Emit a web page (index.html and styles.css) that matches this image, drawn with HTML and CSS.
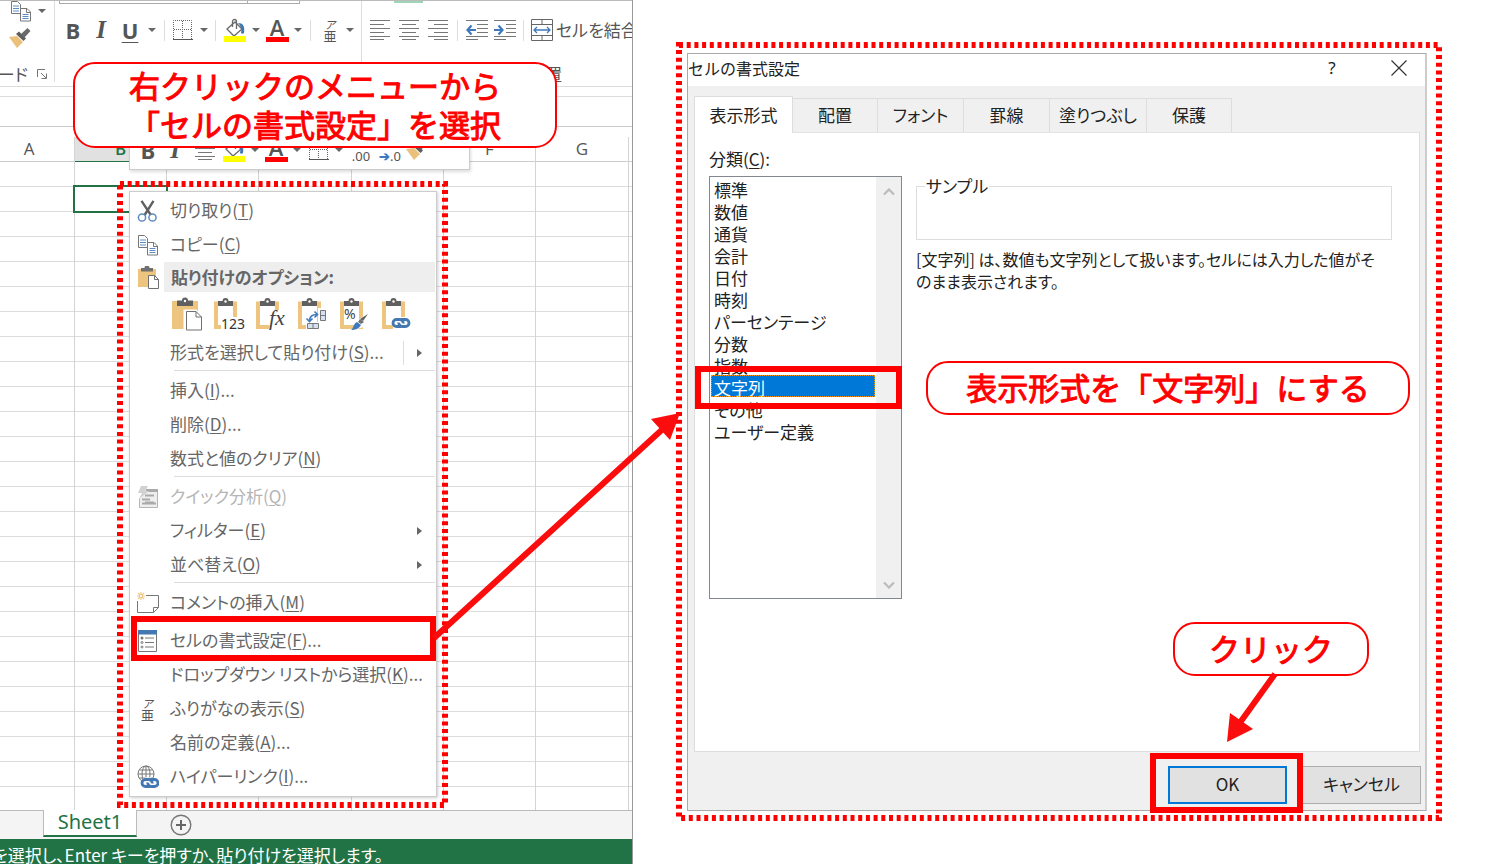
FILE: index.html
```html
<!DOCTYPE html>
<html lang="ja">
<head>
<meta charset="utf-8">
<title>セルの書式設定</title>
<link rel="stylesheet" href="styles.css">
</head>
<body>
<svg class="defs" aria-hidden="true">
  <symbol id="i-copy" viewBox="0 0 22 22">
    <path d="M1.5 1.5h6l3 3v9h-9z" fill="#fff" stroke="#777"/><path d="M3 6h6M3 8.500h6M3 11h6" stroke="#5b8cc4"/>
    <path d="M10.500 8.500h6.500l3.500 3.500v9h-10z" fill="#fff" stroke="#777"/><path d="M16.500 8.500v4h4" fill="none" stroke="#777"/><path d="M12.500 14.500h6M12.500 16.500h6M12.500 18.500h6" stroke="#5b8cc4"/>
  </symbol>
  <symbol id="i-brush" viewBox="0 0 24 22">
    <path d="M1 10l8-1 6 6-6 6z" fill="#eac07b"/><path d="M8 7l3-2.500 7 7L15.500 14z" fill="#5e5e5e"/><path d="M13 7l6.500-6 3 3-6 6.500z" fill="#6a6a6a"/>
  </symbol>
  <symbol id="i-bucket" viewBox="0 0 24 24">
    <path d="M4 11l8-7 7 7-8 7z" fill="#fff" stroke="#6a6a6a" stroke-width="1.300"/><path d="M9.500 9V3.500a2 2 0 0 1 4 0V11" fill="none" stroke="#6a6a6a" stroke-width="1.300"/><path d="M15 5c5 0 7 3 6 10-1 1-2 1-3 0 1-4 0-7-3-10z" fill="#3d78b5"/><path d="M1 18h22v6H1z" fill="#ff0"/>
  </symbol>
  <symbol id="i-border" viewBox="0 0 22 22">
    <path d="M1.500 20V1.500h18V20M10.500 2v18M2 10.500h18" fill="none" stroke="#666" stroke-dasharray="1 1"/><path d="M1 20.500h20" stroke="#555"/>
  </symbol>
  <symbol id="i-left" viewBox="0 0 20 22"><path d="M0 1.500h20M0 5.500h14M0 9.500h20M0 13.500h14M0 17.500h20M0 20.500h14" stroke="#777"/></symbol>
  <symbol id="i-center" viewBox="0 0 20 22"><path d="M0 1.500h20M3 5.500h14M0 9.500h20M3 13.500h14M0 17.500h20M3 20.500h14" stroke="#777"/></symbol>
  <symbol id="i-right" viewBox="0 0 20 22"><path d="M0 1.500h20M6 5.500h14M0 9.500h20M6 13.500h14M0 17.500h20M6 20.500h14" stroke="#777"/></symbol>
  <symbol id="i-outdent" viewBox="0 0 22 22"><path d="M0 1.500h22M11 5.500h11M11 9.500h11M11 13.500h11M0 17.500h22M0 20.500h12" stroke="#777"/><path d="M1 11h9M5.500 6.500L1.500 11l4 4.500" fill="none" stroke="#3f79bd" stroke-width="2.200"/></symbol>
  <symbol id="i-indent" viewBox="0 0 22 22"><path d="M0 1.500h22M12 5.500h10M12 9.500h10M12 13.500h10M0 17.500h22M0 20.500h12" stroke="#777"/><path d="M0 11h9M4.500 6.500l4 4.500-4 4.500" fill="none" stroke="#3f79bd" stroke-width="2.200"/></symbol>
  <symbol id="i-merge" viewBox="0 0 22 22"><path d="M.5.500h21v21H.5zM0 5.500h22M0 16.500h22M11 0v5M11 17v5" fill="none" stroke="#666"/><path d="M3 11h16M6 8l-3 3 3 3M16 8l3 3-3 3" fill="none" stroke="#3f79bd" stroke-width="1.300"/></symbol>
  <symbol id="i-cut" viewBox="0 0 22 22">
    <path d="M4.500.8L14.500 16M16.500.8L7 16" stroke="#606060" stroke-width="2.400"/><circle cx="5" cy="17.500" r="3.600" fill="#fff" stroke="#5a8ac0" stroke-width="1.500"/><circle cx="15.500" cy="17.500" r="3.600" fill="#fff" stroke="#5a8ac0" stroke-width="1.500"/>
  </symbol>
  <symbol id="i-paste" viewBox="0 0 22 23">
    <path d="M1 3h18v18H1z" fill="#eec57e"/><path d="M4 2h3.500a2.500 2.500 0 0 1 5 0H16v3.500H4z" fill="#707070"/><path d="M11.500 9.500h6l4 4v9h-10z" fill="#fff" stroke="#707070"/><path d="M17.500 9.500v4h4" fill="none" stroke="#707070"/>
  </symbol>
  <symbol id="i-pasteall" viewBox="0 0 34 34">
    <path d="M2 4h26v28H2z" fill="#eec57e"/><path d="M7 3.500h5a3 3 0 0 1 6 0h5V9H7z" fill="#606060"/><circle cx="15" cy="4" r="1.200" fill="#fff"/><path d="M15.500 14.500h10l6 6v12.500h-16z" fill="#fff" stroke="#fff" stroke-width="4"/><path d="M16.500 14.500h9.500l5.500 5.500v13h-15z" fill="#fff" stroke="#707070"/><path d="M26 14.500V20h5.500" fill="none" stroke="#707070"/>
  </symbol>
  <symbol id="i-board" viewBox="0 0 34 34">
    <path d="M4 6.500h19v23.500H4z" fill="#fff" stroke="#eec57e" stroke-width="4"/><path d="M6 4h4.500a3 3 0 0 1 6 0H21V9H6z" fill="#606060"/><circle cx="13.500" cy="4.500" r="1.200" fill="#fff"/>
  </symbol>
  <symbol id="i-link" viewBox="0 0 20 12">
    <path d="M10.500 8.500H6a3.200 3.200 0 0 1 0-6h4a3.200 3.200 0 0 1 2.500 4" fill="none" stroke="#fff" stroke-width="4.500"/><path d="M10 9.500H5.500a3.500 3.500 0 0 1 0-7H9a3.600 3.600 0 0 1 3.200 4" fill="none" stroke="#4478b0" stroke-width="2.800"/><path d="M10 2.500h4.500a3.500 3.500 0 0 1 0 7H11a3.600 3.600 0 0 1-3.200-4" fill="none" stroke="#4478b0" stroke-width="2.800"/>
  </symbol>
</svg>

<main class="page">
  <section class="excel">
    <div class="ribbon">
      <div class="group clipboard">
        <div class="clip-tools">
          <button class="tool" aria-label="コピー"><svg width="22" height="22"><use href="#i-copy"/></svg></button><i class="caret"></i>
          <button class="tool" aria-label="書式のコピー"><svg width="24" height="22"><use href="#i-brush"/></svg></button>
        </div>
        <div class="group-name"><span>クリップボード</span>
          <svg width="11" height="11" viewBox="0 0 11 11"><path d="M.5 8V.5H8M4 4l5 5M9.500 4.500v5h-5" fill="none" stroke="#777"/></svg></div>
      </div>
      <div class="group font">
        <div class="boxes"><i></i><i></i></div>
        <div class="tools">
          <button class="tool bold">B</button><button class="tool italic">I</button><button class="tool under">U</button><i class="caret"></i><i class="rule"></i>
          <button class="tool" aria-label="罫線"><svg width="22" height="22"><use href="#i-border"/></svg></button><i class="caret"></i><i class="rule"></i>
          <button class="tool" aria-label="塗りつぶしの色"><svg width="24" height="24"><use href="#i-bucket"/></svg></button><i class="caret"></i>
          <button class="tool color">A</button><i class="caret"></i><i class="rule"></i>
          <button class="tool ruby"><span>ア</span><span>亜</span></button><i class="caret"></i>
        </div>
      </div>
      <div class="group align">
        <i class="active"></i>
        <div class="tools">
          <button class="tool" aria-label="左揃え"><svg width="20" height="22"><use href="#i-left"/></svg></button>
          <button class="tool" aria-label="中央揃え"><svg width="20" height="22"><use href="#i-center"/></svg></button>
          <button class="tool" aria-label="右揃え"><svg width="20" height="22"><use href="#i-right"/></svg></button><i class="rule"></i>
          <button class="tool" aria-label="インデントを減らす"><svg width="22" height="22"><use href="#i-outdent"/></svg></button>
          <button class="tool" aria-label="インデントを増やす"><svg width="22" height="22"><use href="#i-indent"/></svg></button><i class="rule"></i>
          <button class="tool merge"><svg width="22" height="22"><use href="#i-merge"/></svg>セルを結合</button>
        </div>
        <div class="align-name">配置</div>
      </div>
    </div>
    <div class="strip"></div>
    <div class="formula"></div>
    <div class="heads cols"><span>A</span><span class="on">B</span><span></span><span></span><span></span><span>F</span><span>G</span><span></span></div>
    <div class="sheet">
      <div class="cols lines"><i></i><i></i><i></i><i></i><i></i><i></i><i></i><i></i></div>
      <div class="selected"></div>
    </div>
    <div class="tabs-bar"><i class="nav"></i><a class="sheet-tab" href="#sheet1">Sheet1</a>
      <button class="add" aria-label="新しいシート"><svg width="22" height="22" viewBox="0 0 22 22"><circle cx="11" cy="11" r="9.800" fill="none" stroke="#777" stroke-width="1.400"/><path d="M11 6v10M6 11h10" stroke="#666" stroke-width="2"/></svg></button></div>
    <div class="status"><span>先を選択し、Enter キーを押すか、貼り付けを選択します。</span></div>

    <div class="mini">
      <button class="tool bold">B</button><button class="tool italic">I</button>
      <button class="tool" aria-label="中央揃え"><svg width="20" height="22"><use href="#i-center"/></svg></button>
      <button class="tool" aria-label="塗りつぶしの色"><svg width="24" height="24"><use href="#i-bucket"/></svg></button><i class="caret"></i>
      <button class="tool color">A</button><i class="caret"></i>
      <button class="tool" aria-label="罫線"><svg width="22" height="22"><use href="#i-border"/></svg></button><i class="caret"></i>
      <button class="tool dec"><span>←.0</span><span>.00</span></button>
      <button class="tool dec"><span>.00</span><span><b>➔</b>.0</span></button>
      <button class="tool" aria-label="書式のコピー"><svg width="24" height="22"><use href="#i-brush"/></svg></button>
    </div>

    <div class="menu-wrap">
      <svg class="dots" aria-hidden="true"><rect x="0" y="0" width="100%" height="100%"/></svg>
      <ul class="menu" role="menu">
        <li><svg width="22" height="22"><use href="#i-cut"/></svg><a href="#">切り取り(<u>T</u>)</a></li>
        <li><svg width="22" height="22"><use href="#i-copy"/></svg><a href="#">コピー(<u>C</u>)</a></li>
        <li class="title"><svg width="22" height="23"><use href="#i-paste"/></svg><strong>貼り付けのオプション:</strong></li>
        <li class="pastes">
          <button aria-label="貼り付け"><svg width="34" height="34"><use href="#i-pasteall"/></svg></button>
          <button aria-label="値"><svg width="34" height="34" viewBox="0 0 34 34"><use href="#i-board"/><path d="M9 20h22v14H9z" fill="#fff"/><text x="9" y="32" class="t123">123</text></svg></button>
          <button aria-label="数式"><svg width="34" height="34" viewBox="0 0 34 34"><use href="#i-board"/><path d="M17 13h14v20H15z" fill="#fff"/><text x="15" y="28" class="tfx">fx</text></svg></button>
          <button aria-label="行列を入れ替える"><svg width="34" height="34" viewBox="0 0 34 34"><use href="#i-board"/><path d="M22 11h9v21H10v-7h12z" fill="#fff"/><path d="M24.500 13.500h5v10h-5zM24.500 18.500h5M11.500 26.500h11v5h-11zM17 26.500v5" fill="#d5e1f0" stroke="#777"/><path d="M13.500 24c0-4 2-6.500 7.500-6.500M18.500 14.500l3 3-3 3M10.500 21.500l3 3 3-3" fill="none" stroke="#3f79bd" stroke-width="1.600"/></svg></button>
          <button aria-label="書式設定"><svg width="34" height="34" viewBox="0 0 34 34"><use href="#i-board"/><path d="M14 33l6-10 9-6 3 3-6 10z" fill="#fff"/><text x="6" y="22" class="tpc">%</text><path d="M30 17l-5 7-3-2z" fill="#606060"/><path d="M22 22l4 3-3 2-3-2z" fill="#707070"/><path d="M19 25l4 3c-2 4-6 5-10 5 3-2 2-6 6-8z" fill="#3f79bd"/></svg></button>
          <button aria-label="リンク貼り付け"><svg width="34" height="34" viewBox="0 0 34 34"><use href="#i-board"/><path d="M13 20h18v12H13z" fill="#fff"/><use href="#i-link" x="11" y="20" width="20" height="12"/></svg></button>
        </li>
        <li class="split"><a href="#">形式を選択して貼り付け(<u>S</u>)...</a><i class="more"></i></li>
        <li class="sep"></li>
        <li><a href="#">挿入(<u>I</u>)...</a></li>
        <li><a href="#">削除(<u>D</u>)...</a></li>
        <li><a href="#">数式と値のクリア(<u>N</u>)</a></li>
        <li class="sep"></li>
        <li class="off"><svg width="22" height="24" viewBox="0 0 22 24"><path d="M9 4.500h11.500v18H2.500v-9" fill="#eee" stroke="#b5b5b5"/><path d="M9 4h12v3H9z" fill="#aaa"/><path d="M8 10.500h9M5 14.500h8M5 18.500h14M8 17.500h9" stroke="#aaa" stroke-width="2"/><path d="M4 1h7L8 6h4L2 14l3-6H1z" fill="#d3d0d3"/></svg><a href="#">クイック分析(<u>Q</u>)</a></li>
        <li><a href="#">フィルター(<u>E</u>)</a><i class="more"></i></li>
        <li><a href="#">並べ替え(<u>O</u>)</a><i class="more"></i></li>
        <li class="sep"></li>
        <li><svg width="22" height="22" viewBox="0 0 22 22"><path d="M9 3.500h12.500v12l-5 5H.5V9" fill="#fff" stroke="#777"/><path d="M21.500 15.500h-5v5" fill="none" stroke="#777"/><path d="M4 0v8M0 4h8M1 1l6 6M7 1L1 7" stroke="#ecc888" stroke-width="1.200"/><circle cx="4" cy="4" r="1.600" fill="#fff" stroke="#ecc888"/></svg><a href="#">コメントの挿入(<u>M</u>)</a></li>
        <li class="sep"></li>
        <li class="marked"><svg width="20" height="22" viewBox="0 0 20 22"><path d="M.5.500h18v21H.5z" fill="#fff" stroke="#777"/><path d="M0 0h19v4.500H0z" fill="#4478b0"/><path d="M7 8h9M7 12.500h9M7 17h9" stroke="#777"/><circle cx="4" cy="8" r="1.500" fill="#777"/><circle cx="4" cy="12.500" r="1" fill="#fff" stroke="#777"/><circle cx="4" cy="17" r="1" fill="#fff" stroke="#777"/></svg><a href="#">セルの書式設定(<u>F</u>)...</a><span class="mark"></span></li>
        <li><a href="#">ドロップダウン リストから選択(<u>K</u>)...</a></li>
        <li><span class="ruby"><span>ア</span><span>亜</span></span><a href="#">ふりがなの表示(<u>S</u>)</a></li>
        <li><a href="#">名前の定義(<u>A</u>)...</a></li>
        <li><svg width="22" height="24" viewBox="0 0 22 24"><circle cx="9" cy="9" r="8" fill="#fff" stroke="#777"/><ellipse cx="9" cy="9" rx="4" ry="8" fill="none" stroke="#777"/><path d="M9 1v16M1 9h16M2.500 5h13M2.500 13h13" stroke="#777"/><path d="M6 13h16v10H6z" fill="#fff"/><use href="#i-link" x="3" y="12" width="20" height="12"/></svg><a href="#">ハイパーリンク(<u>I</u>)...</a></li>
      </ul>
    </div>
    <p class="callout call-menu">右クリックのメニューから<br>「セルの書式設定」を選択</p>
  </section>

  <section class="right">
    <div class="frame">
      <svg class="dots" aria-hidden="true"><rect x="0" y="0" width="100%" height="100%"/></svg>
      <div class="dialog" role="dialog" aria-labelledby="dlg-title">
        <header class="titlebar"><h1 id="dlg-title">セルの書式設定</h1>
          <button class="help" aria-label="ヘルプ">?</button>
          <button class="close" aria-label="閉じる"><svg width="16" height="16" viewBox="0 0 16 16"><path d="M.5.500l15 15M15.500.500l-15 15" stroke="#333" stroke-width="1.200"/></svg></button></header>
        <nav class="tabs" role="tablist">
          <button class="on" role="tab">表示形式</button><button role="tab">配置</button><button role="tab">フォント</button><button role="tab">罫線</button><button role="tab">塗りつぶし</button><button role="tab">保護</button>
        </nav>
        <div class="panel">
          <div class="category">
            <label for="cat">分類(<u>C</u>):</label>
            <div class="list">
              <select id="cat" size="12">
                <option>標準</option><option>数値</option><option>通貨</option><option>会計</option><option>日付</option><option>時刻</option><option>パーセンテージ</option><option>分数</option><option>指数</option><option selected>文字列</option><option>その他</option><option>ユーザー定義</option>
              </select>
              <div class="scroll">
                <svg width="12" height="8" viewBox="0 0 12 8"><path d="M1 6.500l5-5 5 5" fill="none" stroke="#bbb" stroke-width="2.200"/></svg>
                <svg width="12" height="8" viewBox="0 0 12 8"><path d="M1 1.500l5 5 5-5" fill="none" stroke="#bbb" stroke-width="2.200"/></svg>
              </div>
              <span class="mark"></span>
            </div>
          </div>
          <div class="detail">
            <fieldset><legend>サンプル</legend></fieldset>
            <p>[文字列] は、数値も文字列として扱います。セルには入力した値がそ<br>のまま表示されます。</p>
          </div>
        </div>
        <footer class="actions">
          <span class="ok-wrap"><button class="ok">OK</button><span class="mark"></span></span>
          <button class="cancel">キャンセル</button>
        </footer>
        <p class="callout call-format">表示形式を「文字列」にする</p>
        <p class="callout call-click">クリック</p>
      </div>
    </div>
  </section>

  <svg class="arrows" viewBox="0 0 1500 864" preserveAspectRatio="none" aria-hidden="true">
    <path d="M434 638L665 427M1275 674L1239 724" stroke="#fb0d0d" stroke-width="6" fill="none"/>
    <path d="M680 413L651 419L670 440zM1227 742L1230 713L1253 729z" fill="#fb0d0d"/>
  </svg>
</main>
</body>
</html>
```

FILE: styles.css
```css
* { box-sizing: border-box; }
body {
  margin: 0;
  background: #fff;
  color: #222;
  font: 17px/22px "Noto Sans CJK JP", sans-serif;
  font-feature-settings: "palt";
}
button { font: inherit; font-feature-settings: inherit; color: inherit; border: 0; padding: 0; background: none; }
a { color: inherit; text-decoration: none; }
u { text-underline-offset: 2px; }
p, h1, ul { margin: 0; padding: 0; }
svg { display: block; flex: none; }
.defs { position: absolute; width: 0; height: 0; }

.page { position: relative; display: flex; min-height: 100vh; }
.excel {
  position: relative;
  flex: none;
  width: 42.2%;
  display: flex;
  flex-direction: column;
  border-right: 1px solid #999;
  overflow: hidden;
}

/* ribbon */
.ribbon { display: flex; height: 87px; border-top: 1px solid #bbb; border-bottom: 1px solid #ddd; color: #555; overflow: hidden; }
.group { flex: none; height: 81px; border-right: 1px solid #ddd; }
.clipboard { width: 55px; overflow: hidden; }
.clip-tools { display: grid; grid-template: 20px 34px / 32px 20px; justify-items: center; align-items: center; height: 54px; }
.clip-tools .tool { justify-self: end; }
.group-name { display: flex; justify-content: flex-end; align-items: center; gap: 9px; height: 38px; padding-right: 6px; white-space: nowrap; }
.group-name span { flex: none; }
.font { width: 307px; height: 86px; padding-left: 4px; }
.boxes { display: grid; grid-template-columns: 189px 52px; height: 3px; }
.boxes i { border: 1px solid #aaa; border-top: 0; }
.boxes i + i { border-left: 0; }
.tools { display: grid; align-items: center; justify-items: center; height: 52px; }
.font .tools { grid-template-columns: 28px 28px 30px 14px 10px 28px 14px 8px 32px 10px 32px 10px 14px 26px 14px; }
.align { position: relative; flex: 1; border: 0; }
.align .tools { height: 58px; grid-template-columns: 36px 22px 36px 3px 36px 20px 16px 1fr; justify-items: center; }
.align .active { position: absolute; left: 32px; top: 0; width: 29px; height: 2px; background: #9fd5b7; }
.align-name { padding: 4px 0 0 166px; }
.tool { display: flex; align-items: center; justify-content: center; }
.bold, .italic, .under, .color { font: bold 22px/22px "Open Sans", sans-serif; }
.italic { font-family: "Liberation Serif", serif; font-style: italic; font-size: 25px; }
.under { text-decoration: underline; text-underline-offset: 3px; text-decoration-thickness: 1px; }
.color { width: 23px; border-bottom: 5px solid #f00; font-weight: 600; line-height: 19px; }
.caret { border: 4px solid transparent; border-top-color: #666; border-bottom: 0; }
.rule { width: 1px; height: 21px; background: #ddd; }
.ruby { display: flex; flex-direction: column; align-items: center; font-size: 13px; line-height: 13px; color: #555; }
.ruby span:first-child { font-size: 11px; line-height: 10px; font-style: italic; }
.merge { justify-self: start; gap: 3px; white-space: nowrap; font-size: 17px; }

.strip { height: 10px; border-bottom: 1px solid #ddd; }
.formula { height: 30px; border-bottom: 1px solid #ccc; }

/* sheet */
.cols { display: grid; grid-template-columns: 75px 92px 92px 93px 92px 92px 93px 1fr; }
.cols > * { border-right: 1px solid #d4d4d4; }
.cols > :last-child { border-right: 0; }
.heads { height: 35px; padding-top: 10px; border-bottom: 1px solid #ccc; line-height: 24px; color: #555; text-align: center; font-family: "Open Sans", sans-serif; }
.heads > :first-child { padding-right: 16px; }
.heads .on { background: #e1e1e1; border-bottom: 2px solid #217346; margin-bottom: -1px; color: #217346; font-weight: 600; }
.sheet { position: relative; flex: 1; min-height: 648px; background: repeating-linear-gradient(#fff 0 24px, #dcdcdc 24px 25px); }
.lines { height: 100%; }
.selected { position: absolute; left: 73px; top: 23px; width: 95px; height: 28px; border: 2px solid #217346; }
.tabs-bar { display: flex; height: 29px; background: #f4f4f4; border-top: 1px solid #bbb; }
.nav { width: 43px; }
.sheet-tab { width: 94px; margin-top: -1px; height: 27px; background: #fff; border: 1px solid #bbb; border-width: 0 1px 2px; border-bottom-color: #217346; color: #217346; text-align: center; font: 20px/24px "Noto Sans", sans-serif; }
.add { margin: 3px 0 0 33px; height: 22px; }
.status { display: flex; justify-content: flex-end; width: 100%; height: 25px; padding: 5px calc(100% - 383px) 0 0; background: #217346; color: #fff; white-space: nowrap; overflow: hidden; }
.status span { flex: none; }

/* mini toolbar and menu */
.mini {
  position: absolute; left: 129px; top: 122px; width: 341px; height: 48px; padding: 8px 0 0 4px;
  display: grid; grid-template-columns: 28px 26px 34px 24px 18px 24px 18px 26px 14px 30px 28px 26px;
  align-items: center; justify-items: center;
  background: #fff; border: 1px solid #ccc; box-shadow: 1px 2px 3px #0002; color: #555;
}
.dec { flex-direction: column; font: 13px/13px "Noto Sans", sans-serif; }
.dec b { color: #3f79bd; }
.menu-wrap { position: absolute; left: 120px; top: 184px; padding: 7px 8px 8px 9px; width: 325px; }
.dots { position: absolute; inset: 0; width: 100%; height: 100%; overflow: visible; }
.dots rect { fill: none; stroke: #f00; stroke-width: 6; stroke-dasharray: 4 3.7; }
.menu { position: relative; list-style: none; background: #fff; border: 1px solid #ccc; box-shadow: 1px 1px 3px #0003; padding: 2px 1px; color: #666; }
.menu li { position: relative; display: grid; grid-template-columns: 33px 1fr 24px; align-items: center; height: 34px; }
.menu li > svg, .menu li > .ruby { grid-column: 1; justify-self: center; }
.menu a { grid-column: 2; padding: 0 0 2px 6px; white-space: nowrap; }
.menu .title { height: 30px; }
.title strong { grid-column: 2 / 4; background: #eee; line-height: 30px; padding-left: 7px; }
.menu .pastes { height: 44px; display: flex; gap: 8px; padding-left: 39px; }
.menu .sep { height: 4px; margin-left: 43px; border-top: 1px solid #ddd; }
.more { grid-column: 3; border: 4px solid transparent; border-left: 5px solid #666; border-right: 0; justify-self: center; margin-right: 7px; }
.split a { border-right: 1px solid #ddd; margin-right: 7px; }
.off { color: #b5b5b5; }
.t123 { font: 14px "Noto Sans", sans-serif; fill: #333; }
.tfx { font: italic 22px "Liberation Serif", serif; fill: #444; }
.tpc { font: 14px "Noto Sans", sans-serif; fill: #444; }
.mark { position: absolute; border: 6px solid #f00; }
.menu .mark { inset: -8px -1px -3px 0; }

/* annotations */
.callout {
  position: absolute; display: flex; align-items: center; justify-content: center; padding-bottom: 3px;
  background: #fff; border: 2px solid #f00; border-radius: 22px; color: #f00;
  font-size: 31px; line-height: 39px; font-weight: 400; font-feature-settings: normal; white-space: nowrap;
  -webkit-text-stroke: 1px #f00;
}
.call-menu { left: 73px; top: 62px; width: 484px; height: 86px; }
.call-format { left: 238px; top: 307px; width: 484px; height: 54px; }
.call-click { right: 56px; bottom: 134px; width: 196px; height: 54px; }
.arrows { position: absolute; inset: 0; width: 100%; height: 100%; pointer-events: none; }

/* dialog */
.right { flex: 1; min-width: 0; display: flex; padding: 45px 61px 46px 46px; }
.frame { position: relative; flex: 1; min-width: 0; display: flex; padding: 8px 12px 7px 8px; }
.dialog { position: relative; flex: 1; min-width: 0; display: flex; flex-direction: column; background: #f0f0f0; border: 1px solid #aaa; border-right: 2px solid #ccc; }
.titlebar { display: flex; align-items: center; height: 32px; padding-bottom: 4px; background: #fff; }
.titlebar h1 { flex: 1; font-size: 16px; line-height: 28px; font-weight: 400; font-feature-settings: normal; }
.help { width: 24px; margin-right: 47px; font-family: "Noto Sans", sans-serif; }
.close { margin-right: 18px; }
.tabs { display: flex; align-items: flex-end; height: 46px; padding-left: 6px; }
.tabs button { height: 34px; border: 1px solid #ddd; border-width: 1px 1px 0 0; width: 86px; padding-bottom: 1px; }
.tabs button:nth-child(2) { width: 85px; }
.tabs button:nth-child(5) { width: 97px; }
.tabs button:nth-child(6) { width: 85px; }
.tabs .on { width: 99px; height: 37px; margin-bottom: -1px; background: #fff; border-left-width: 1px; position: relative; }
.panel { flex: 1; display: flex; margin: 0 5px 0 6px; padding: 14px 27px 0 14px; background: #fff; border: 1px solid #ddd; border-top-color: #e3e3e3; }
.category label { display: block; line-height: 24px; margin-bottom: 5px; }
.list { position: relative; display: flex; width: 193px; height: 423px; border: 1px solid #828790; }
.list select {
  flex: 1; height: 100%; border: 0; outline: 0; padding: 0 1px; background: #fff; overflow: hidden;
  font: inherit; font-feature-settings: inherit; color: #222; scrollbar-width: none;
}
.list option { height: 22px; min-height: 22px; padding: 0 3px; line-height: 20px; }
.list option:checked { color: #fff; background: linear-gradient(#0078d7, #0078d7); outline: 1px dotted #f90; outline-offset: -1px; }
.scroll { width: 25px; display: flex; flex-direction: column; justify-content: space-between; align-items: center; padding: 11px 0 9px; background: #f0f0f0; }
.list .mark { left: -15px; right: -1px; top: 189px; height: 43px; }
.detail { flex: 1; min-width: 0; padding: 28px 0 0 14px; }
fieldset { margin: 0; height: 65px; border: 1px solid #ddd; padding: 0 8px; }
legend { padding: 0 1px; line-height: 22px; }
.detail p { margin-top: 8px; font-size: 16px; white-space: nowrap; }
.actions { display: flex; justify-content: flex-end; gap: 15px; padding: 14px 4px 6px; }
.actions button { width: 119px; height: 38px; padding-bottom: 2px; background: #e1e1e1; border: 1px solid #adadad; }
.actions .ok { border: 2px solid #0078d7; }
.ok-wrap { position: relative; }
.ok-wrap .mark { inset: -13px -16px -9px -18px; }
```
